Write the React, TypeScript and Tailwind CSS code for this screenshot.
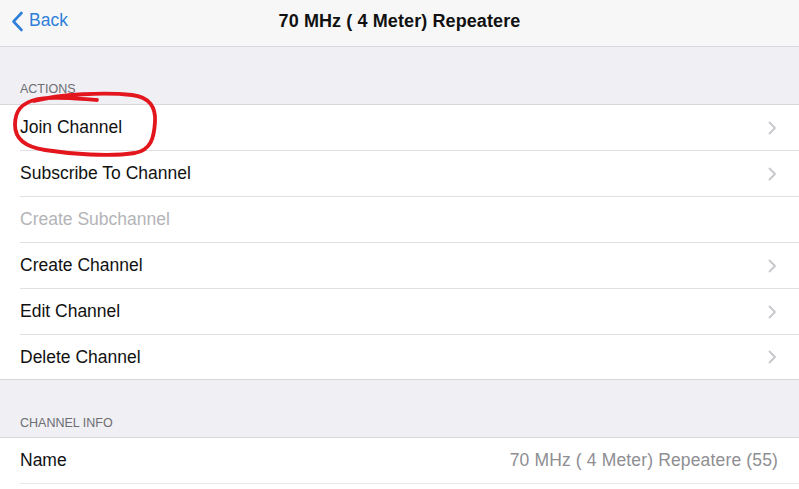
import React from "react";

const Chevron = () => (
  <svg width="9" height="14" viewBox="0 0 9 14" className="shrink-0">
    <path d="M1.5 1.5 L7 7 L1.5 12.5" fill="none" stroke="#c7c7cc" strokeWidth="1.8" strokeLinecap="round" strokeLinejoin="round" />
  </svg>
);

type Row = { label: string; disabled?: boolean };

const actions: Row[] = [
  { label: "Join Channel" },
  { label: "Subscribe To Channel" },
  { label: "Create Subchannel", disabled: true },
  { label: "Create Channel" },
  { label: "Edit Channel" },
  { label: "Delete Channel" },
];

export default function App() {
  return (
    <div
      className="relative w-[799px] h-[489px] overflow-hidden bg-[#efeff4]"
      style={{ fontFamily: '"Liberation Sans", Arial, sans-serif' }}
    >
      {/* Nav bar */}
      <div className="h-[47px] bg-[#f7f7f8] border-b border-[#d8d8dc] flex items-center relative">
        <div className="flex items-center pl-[11px] gap-[5px] text-[#2f7fd8] -mt-[4px]">
          <svg width="13" height="21" viewBox="0 0 13 21">
            <path d="M10.5 2 L2.5 10.5 L10.5 19" fill="none" stroke="#2f7fd8" strokeWidth="2.6" strokeLinecap="round" strokeLinejoin="round" />
          </svg>
          <span className="text-[17.5px] leading-none">Back</span>
        </div>
        <div className="absolute inset-x-0 top-0 h-[42px] flex items-center justify-center pointer-events-none">
          <span className="text-[18px] font-bold text-[#111] tracking-[0.1px]">70 MHz ( 4 Meter) Repeatere</span>
        </div>
      </div>

      {/* Actions */}
      <div className="pt-[36px] pb-[8px] pl-[20px] text-[12.5px] text-[#6d6d72] leading-[13px] uppercase">Actions</div>
      <div className="bg-white border-t border-b border-[#d8d8dc]">
        {actions.map((r, i) => (
          <div key={r.label} className="pl-[20px]">
            <div
              className={`${i < actions.length - 1 ? "h-[46px] border-b border-[#e0e0e4]" : "h-[44px]"} flex items-center justify-between pr-[22px]`}
            >
              <span className={`text-[17.5px] ${r.disabled ? "text-[#b4b4b8]" : "text-[#111]"}`}>{r.label}</span>
              {!r.disabled && <Chevron />}
            </div>
          </div>
        ))}
      </div>

      {/* Channel Info */}
      <div className="pt-[37px] pb-[7px] pl-[20px] text-[12.5px] text-[#6d6d72] leading-[13px] uppercase">Channel Info</div>
      <div className="bg-white border-t border-[#d8d8dc]">
        <div className="pl-[20px]">
          <div className="h-[46px] flex items-center justify-between pr-[21px] border-b border-[#e8e8ec]">
            <span className="text-[17.5px] text-[#111]">Name</span>
            <span className="text-[17.5px] text-[#8e8e93] tracking-[0.15px]">70 MHz ( 4 Meter) Repeatere (55)</span>
          </div>
          <div className="h-[46px]" />
        </div>
      </div>

      {/* Red hand-drawn annotation */}
      <svg className="absolute left-0 top-0 pointer-events-none" width="799" height="489">
        <path
          d="M34 101 C60 94 105 92 132 95 C150 97 156 108 155 122 C154 138 151 150 135 153 C110 157 70 154 45 150 C25 147 15 138 15 125 C15 112 20 103 38 99 C55 96 80 99 97 100"
          fill="none"
          stroke="#e3151d"
          strokeWidth="3.8"
          strokeLinecap="round"
          strokeLinejoin="round"
        />
      </svg>
    </div>
  );
}
